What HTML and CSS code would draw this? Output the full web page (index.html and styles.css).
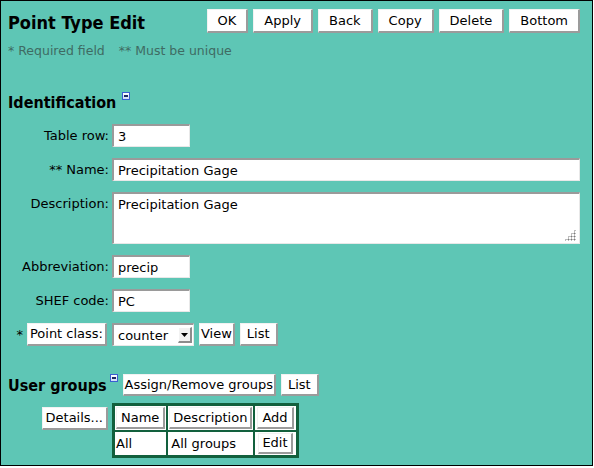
FILE: index.html
```html
<!DOCTYPE html>
<html>
<head>
<meta charset="utf-8">
<title>Point Type Edit</title>
<link rel="stylesheet" href="styles.css">
</head>
<body>
<div class="frame">
  <header class="top">
    <h1 class="title">Point Type Edit</h1>
    <div class="actions">
      <button class="btn btn-head">OK</button>
      <button class="btn btn-head">Apply</button>
      <button class="btn btn-head">Back</button>
      <button class="btn btn-head">Copy</button>
      <button class="btn btn-head">Delete</button>
      <button class="btn btn-head">Bottom</button>
    </div>
  </header>
  <p class="note">* Required field <span class="note-gap">** Must be unique</span></p>

  <section class="section">
    <h2 class="section-title">Identification <span class="toggle"></span></h2>
    <div class="form">
      <label class="label">Table row:</label>
      <div class="field"><input class="input input-short" value="3"></div>

      <label class="label">** Name:</label>
      <div class="field"><input class="input input-wide" value="Precipitation Gage"></div>

      <label class="label label-top">Description:</label>
      <div class="field textarea-wrap"><textarea class="input textarea">Precipitation Gage</textarea><span class="grip"></span></div>

      <label class="label">Abbreviation:</label>
      <div class="field"><input class="input input-short" value="precip"></div>

      <label class="label">SHEF code:</label>
      <div class="field"><input class="input input-short" value="PC"></div>

      <div class="label label-btn"><span class="req">*</span><button class="btn btn-sm pad2">Point class:</button></div>
      <div class="field field-row">
        <span class="select">
          <select class="select-box"><option>counter</option></select>
          <span class="select-arrow"><svg width="7" height="4" viewBox="0 0 7 4"><path d="M0 0h7L3.5 4z" fill="#000"/></svg></span>
        </span>
        <button class="btn btn-sm pad1">View</button>
        <button class="btn btn-sm pad6">List</button>
      </div>
    </div>
  </section>

  <section class="section groups">
    <div class="groups-head">
      <h2 class="section-title">User groups</h2>
      <span class="toggle toggle-groups"></span>
      <button class="btn btn-sm btn-22 pad1">Assign/Remove groups</button>
      <button class="btn btn-sm btn-22 pad6">List</button>
    </div>
    <div class="form form-groups">
      <div class="label label-btn label-details"><button class="btn btn-sm pad3">Details...</button></div>
      <div class="field">
        <table class="grid">
          <tr>
            <td><button class="btn btn-sm btn-22 pad4">Name</button></td>
            <td><button class="btn btn-sm btn-22 pad3">Description</button></td>
            <td class="cell-btn"><button class="btn btn-sm btn-22 pad4">Add</button></td>
          </tr>
          <tr>
            <td class="cell-text">All</td>
            <td class="cell-text cell-desc">All groups</td>
            <td class="cell-btn"><button class="btn btn-sm btn-20 pad3">Edit</button></td>
          </tr>
        </table>
      </div>
    </div>
  </section>
</div>
</body>
</html>
```

FILE: styles.css
```css
html, body {
  margin: 0;
  padding: 0;
  background: #ffffff;
}

body {
  font-family: "DejaVu Sans", "Liberation Sans", sans-serif;
  font-size: 13px;
  color: #000;
}

.frame {
  box-sizing: border-box;
  width: 593px;
  height: 466px;
  border: 1px solid #000;
  background: #5ec6b5;
  padding: 0 12px 0 7px;
  overflow: hidden;
}

.top {
  display: flex;
  align-items: flex-start;
  justify-content: space-between;
  padding-top: 8px;
}

.title {
  margin: 2px 0 0 0;
  font-family: "DejaVu Sans Condensed", "DejaVu Sans", sans-serif;
  font-stretch: condensed;
  font-weight: bold;
  font-size: 18px;
  line-height: 24px;
}

.actions {
  display: flex;
  gap: 5px;
}

.btn {
  font-family: "DejaVu Sans", sans-serif;
  font-size: 13px;
  color: #000;
  background: #fff;
  box-sizing: border-box;
  margin: 0;
  border-style: solid;
  border-width: 1px 2px 2px 1px;
  border-color: #f2f2f2 #9b9b9b #9b9b9b #f2f2f2;
  border-radius: 0;
  line-height: 16px;
  white-space: nowrap;
}

.btn-head {
  height: 24px;
  padding: 0 10px;
}

.btn-sm {
  height: 23px;
  padding: 0 3px;
}

.btn-22 { height: 22px; }
.btn-20 { height: 21px; }

.pad1 { padding: 0 1px; }
.pad2 { padding: 0 2px; }
.pad3 { padding: 0 3px; }
.pad4 { padding: 0 4px; }
.pad6 { padding: 0 6px; }

.note {
  margin: 8px 0 0 0;
  font-size: 12.5px;
  line-height: 16px;
  color: #3f6b63;
}

.note-gap {
  margin-left: 10px;
}

.section-title {
  margin: 0;
  font-family: "DejaVu Sans Condensed", "DejaVu Sans", sans-serif;
  font-stretch: condensed;
  font-weight: bold;
  font-size: 16px;
  line-height: 20px;
  display: flex;
  align-items: flex-start;
}

.section {
  margin-top: 34px;
}

.toggle {
  display: inline-block;
  box-sizing: border-box;
  width: 8px;
  height: 8px;
  margin-left: 6px;
  margin-top: -1px;
  border: 1px solid #3a5fd0;
  background: linear-gradient(#ffffff, #cfdcf7);
  position: relative;
}

.toggle::after {
  content: "";
  position: absolute;
  left: 1px;
  right: 1px;
  top: 2px;
  height: 2px;
  background: #1c2a60;
}

.form {
  display: grid;
  grid-template-columns: 101px 1fr;
  column-gap: 3px;
  row-gap: 11px;
  margin-top: 11px;
  align-items: center;
}

.label {
  text-align: right;
  white-space: nowrap;
}

.label-top {
  align-self: start;
  padding-top: 4px;
}

.label-btn {
  display: flex;
  justify-content: flex-end;
  align-items: center;
  gap: 4px;
  padding-right: 2px;
}

.req {
  line-height: 16px;
}

.field {
  display: flex;
}

.field-row {
  align-items: center;
  gap: 5px;
}

.input {
  box-sizing: border-box;
  height: 23px;
  margin: 0;
  padding: 1px 4px 0 4px;
  font-family: "DejaVu Sans", sans-serif;
  font-size: 13px;
  color: #000;
  background: #fff;
  border-style: solid;
  border-width: 2px 1px 1px 2px;
  border-color: #9a9a9a #e8e8e8 #e8e8e8 #9a9a9a;
  border-radius: 0;
  outline: none;
}

.input-short { width: 78px; }
.input-wide { width: 468px; }

.textarea-wrap {
  position: relative;
  width: 468px;
}

.textarea {
  width: 468px;
  height: 52px;
  padding: 3px 4px;
  line-height: 16px;
  resize: none;
}

.grip {
  position: absolute;
  right: 4px;
  bottom: 3px;
  width: 12px;
  height: 12px;
  background-image: radial-gradient(circle, #7a7a7a 0.9px, transparent 1.1px);
  background-size: 3px 3px;
  clip-path: polygon(100% 0, 100% 100%, 0 100%);
}

.select {
  position: relative;
  display: inline-block;
  width: 82px;
  height: 23px;
}

.select-box {
  -webkit-appearance: none;
  appearance: none;
  box-sizing: border-box;
  width: 82px;
  height: 23px;
  margin: 0;
  padding: 0 4px;
  font-family: "DejaVu Sans", sans-serif;
  font-size: 13px;
  color: #000;
  background: #fff;
  border-style: solid;
  border-width: 2px 1px 1px 2px;
  border-color: #9a9a9a #e8e8e8 #e8e8e8 #9a9a9a;
  border-radius: 0;
}

.select-arrow {
  position: absolute;
  right: 2px;
  top: 4px;
  box-sizing: border-box;
  width: 14px;
  height: 16px;
  background: #f2f2f2;
  border-style: solid;
  border-width: 1px 2px 2px 1px;
  border-color: #fff #8c8c8c #8c8c8c #fff;
  display: flex;
  align-items: center;
  justify-content: center;
}

.groups {
  margin-top: 28px;
}

.groups-head {
  display: flex;
  align-items: center;
  gap: 5px;
}

.groups-head .section-title {
  margin-top: 2px;
}

.toggle-groups {
  align-self: flex-start;
  margin-left: -2px;
  margin-top: 0;
}

.form-groups {
  margin-top: 7px;
  align-items: start;
}

.label-details {
  padding-top: 4px;
  padding-right: 1px;
}

.grid {
  border-collapse: separate;
  border-spacing: 2px;
  border: 1px solid #12603d;
  background: #12603d;
}

.grid td {
  background: #fff;
  padding: 1px;
  font-size: 13px;
  line-height: 16px;
}

.grid .cell-text {
  padding: 2px 2px 2px 1px;
}

.grid .cell-desc {
  padding-left: 3px;
}

.grid .cell-btn {
  padding: 1px 2px;
  text-align: center;
}
```
